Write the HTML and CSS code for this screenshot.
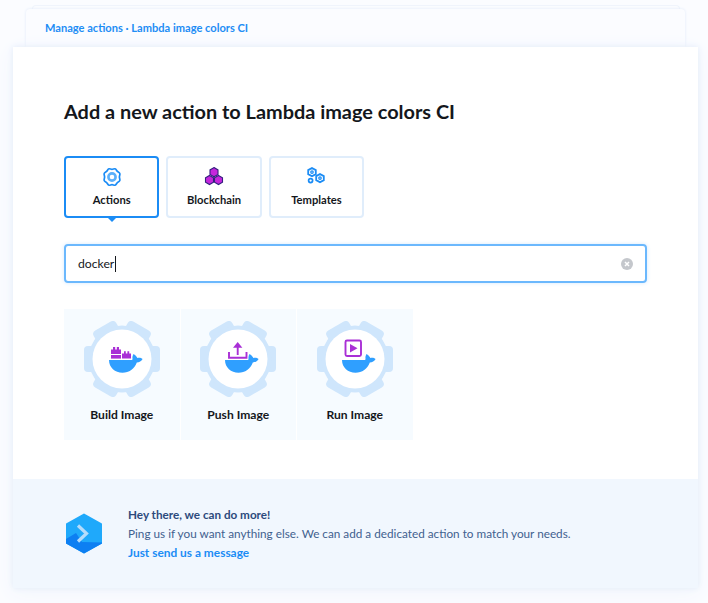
FILE: index.html
```html
<!DOCTYPE html>
<html lang="en">
<head>
    <meta charset="UTF-8">
    <meta name="viewport" content="width=device-width, initial-scale=1.0">
    <link rel="stylesheet" href="styles.css">
    <title>Add a new action</title>
</head>
<body>
    <svg class="defs" width="0" height="0">
        <defs>
            <g id="gear">
                <rect x="25" y="0" width="26" height="76" rx="4" fill="#cfe6fc" transform="rotate(30 38 38)"/>
                <rect x="25" y="0" width="26" height="76" rx="4" fill="#cfe6fc" transform="rotate(90 38 38)"/>
                <rect x="25" y="0" width="26" height="76" rx="4" fill="#cfe6fc" transform="rotate(150 38 38)"/>
                <circle cx="38" cy="38" r="33.5" fill="#cfe6fc"/>
                <circle cx="38" cy="38" r="29.5" fill="#ffffff"/>
            </g>
            <path id="whale" fill="#2f9fff" d="M25 39H47.5C48.2 39 48.6 38.5 48.5 37.7C48.3 36.3 48.6 34.4 49.5 33C51 34 52.8 35.6 53.4 37C55.2 36.4 57.2 36.8 58.6 38C57.4 40.2 55.2 41.4 52.8 41.5C50.6 47.6 45 51.8 38.5 51.8C31 51.8 25 46.5 25 39Z"/>
        </defs>
    </svg>

    <div class="stack-far"></div>
    <div class="stack-near">
        <a class="crumbs" href="#">Manage actions · Lambda image colors CI</a>
    </div>

    <div class="card">
        <div class="card-body">
            <h1>Add a new action to Lambda image colors CI</h1>

            <div class="tabs">
                <div class="tab tab-active">
                    <svg width="20" height="20" viewBox="0 0 20 20" fill="none" stroke="#1b8cf5" stroke-width="1.7">
                        <path d="M7 1.8C8 1.6 8.9 2.4 10 2.4C11.1 2.4 12 1.6 13 1.8C14.2 2.1 14.4 3.4 15.2 4.2C16 5 17.4 5.2 17.8 6.4C18.2 7.6 17.4 8.8 17.4 10C17.4 11.2 18.2 12.4 17.8 13.6C17.4 14.8 16 15 15.2 15.8C14.4 16.6 14.2 17.9 13 18.2C12 18.4 11.1 17.6 10 17.6C8.9 17.6 8 18.4 7 18.2C5.8 17.9 5.6 16.6 4.8 15.8C4 15 2.6 14.8 2.2 13.6C1.8 12.4 2.6 11.2 2.6 10C2.6 8.8 1.8 7.6 2.2 6.4C2.6 5.2 4 5 4.8 4.2C5.6 3.4 5.8 2.1 7 1.8Z"/>
                        <circle cx="10" cy="10" r="3.6" stroke-width="2.6" stroke="#5cb0fa"/>
                    </svg>
                    <span>Actions</span>
                </div>
                <div class="tab">
                    <svg width="20" height="20" viewBox="0 0 20 20" stroke="#33207f" stroke-width="1.1" fill="#c526dc">
                        <path d="M10 0.6L14 2.9V7.5L10 9.8L6 7.5V2.9Z"/>
                        <path d="M5.5 8.4L9.5 10.7V15.3L5.5 17.6L1.5 15.3V10.7Z"/>
                        <path d="M14.5 8.4L18.5 10.7V15.3L14.5 17.6L10.5 15.3V10.7Z"/>
                    </svg>
                    <span>Blockchain</span>
                </div>
                <div class="tab">
                    <svg width="20" height="20" viewBox="0 0 20 20" fill="none" stroke="#1b8cf5">
                        <path stroke-width="1.8" d="M6 1L9.8 3.1V7.1L6 9.2L2.2 7.1V3.1Z"/>
                        <circle cx="6" cy="5.1" r="1.2" stroke-width="1.3"/>
                        <path stroke-width="1.8" d="M14 7L17.8 9.1V13.1L14 15.2L10.2 13.1V9.1Z"/>
                        <circle cx="14" cy="11.1" r="1.2" stroke-width="1.3"/>
                        <circle cx="4.6" cy="13.6" r="2" stroke-width="1.7"/>
                    </svg>
                    <span>Templates</span>
                </div>
            </div>

            <div class="search">
                <span class="search-text">docker</span>
                <span class="caret"></span>
                <span class="search-clear">
                    <svg width="12" height="12" viewBox="0 0 12 12">
                        <circle cx="6" cy="6" r="6" fill="#c4c7cc"/>
                        <path d="M4 4L8 8M8 4L4 8" stroke="#ffffff" stroke-width="1.5"/>
                    </svg>
                </span>
            </div>

            <div class="tiles">
                <div class="tile">
                    <svg width="76" height="76" viewBox="0 0 76 76">
                        <use href="#gear"/>
                        <use href="#whale"/>
                        <g fill="#a92fd6">
                            <path d="M27 28.5H29V26H31.2V28.5H32.8V26H35V28.5H37V33H27Z"/>
                            <rect x="27" y="34" width="10" height="3.6"/>
                            <path d="M38 32.5H40V30.2H41.8V32.5H43.4V30.2H45.2V32.5H47V37.6H38Z"/>
                        </g>
                    </svg>
                    <span>Build Image</span>
                </div>
                <div class="tile">
                    <svg width="76" height="76" viewBox="0 0 76 76">
                        <use href="#gear"/>
                        <use href="#whale"/>
                        <g fill="none" stroke="#a92fd6" stroke-width="1.9">
                            <path d="M29 31V36.8H46.5V31"/>
                            <path d="M37.7 34V24"/>
                        </g>
                        <path d="M37.7 21L42.4 26.8H33Z" fill="#a92fd6"/>
                    </svg>
                    <span>Push Image</span>
                </div>
                <div class="tile">
                    <svg width="76" height="76" viewBox="0 0 76 76">
                        <use href="#gear"/>
                        <use href="#whale"/>
                        <rect x="28.5" y="19.5" width="15.5" height="15.5" rx="1.5" fill="none" stroke="#a92fd6" stroke-width="1.9"/>
                        <path d="M33 23V31.5L40.5 27.2Z" fill="#a92fd6"/>
                    </svg>
                    <span>Run Image</span>
                </div>
            </div>
        </div>

        <div class="card-footer">
            <svg width="38" height="41" viewBox="0 0 38 41">
                <path d="M19 1.5L36 11V30L19 39.5L2 30V11Z" fill="#1fa9fb" stroke="#1fa9fb" stroke-width="2" stroke-linejoin="round"/>
                <path d="M1 26L11 20L17 29L37 29.5V30.5L19 40.5L1 30.5Z" fill="#0d7ff2"/>
                <path d="M13 12.5L21.5 20.5L13 28.5" fill="none" stroke="#b5dcfb" stroke-width="3.2"/>
            </svg>
            <div class="footer-text">
                <strong>Hey there, we can do more!</strong>
                <p>Ping us if you want anything else. We can add a dedicated action to match your needs.</p>
                <a href="#">Just send us a message</a>
            </div>
        </div>
    </div>
</body>
</html>
```

FILE: styles.css
```css
body {
    font-family: 'Lato', 'Open Sans', sans-serif;
    background-color: #fbfcff;
    margin: 0;
    height: 603px;
    overflow: hidden;
    color: #14171c;
}

.defs {
    display: block;
    height: 0;
}

.stack-far {
    height: 4px;
    margin: 5px 28px 0 32px;
    background-color: #fbfcff;
    border: 1px solid #f0f4fc;
    border-bottom: none;
    border-radius: 4px 4px 0 0;
}

.stack-near {
    height: 38px;
    box-sizing: border-box;
    margin: -1px 23px 0 26px;
    padding: 11px 0 0 19px;
    background-color: #fbfcff;
    border-radius: 4px 4px 0 0;
    box-shadow: 0 0 3px #dfe9f8;
}

.crumbs {
    display: block;
    color: #1b8cf5;
    font-size: 11.1px;
    font-weight: 700;
    line-height: 16px;
    text-decoration: none;
}

.card {
    position: relative;
    width: 685px;
    height: 541px;
    margin-left: 13px;
    display: flex;
    flex-direction: column;
    background-color: #ffffff;
    box-shadow: 0 0 6px #e3ecf9, 0 4px 20px #f1f5fc;
}

.card-body {
    flex: 1;
    padding: 52px 51px 0;
}

h1 {
    margin: 0 0 33px;
    font-size: 19.9px;
    font-weight: 700;
    line-height: 24px;
    color: #14171c;
}

.tabs {
    display: flex;
    gap: 7px;
}

.tab {
    position: relative;
    width: 95.4px;
    height: 62px;
    box-sizing: border-box;
    padding-top: 9px;
    display: flex;
    flex-direction: column;
    align-items: center;
    gap: 5px;
    border: 2px solid #e0edfb;
    border-radius: 4px;
    font-size: 11.2px;
    font-weight: 700;
    line-height: 16px;
}

.tab-active {
    border-color: #1b8cf5;
}

.tab-active::after {
    content: "";
    position: absolute;
    left: 42px;
    bottom: -6px;
    border-left: 4px solid transparent;
    border-right: 4px solid transparent;
    border-top: 4px solid #1b8cf5;
}

.search {
    height: 39px;
    box-sizing: border-box;
    margin-top: 26px;
    padding: 0 12px;
    display: flex;
    align-items: center;
    border: 2px solid #6bb8fd;
    border-radius: 4px;
    box-shadow: 0 0 4px #d5e9fd;
    font-size: 12.2px;
}

.caret {
    width: 1px;
    height: 16px;
    margin-left: 1px;
    background-color: #14171c;
}

.search-clear {
    margin-left: auto;
    display: flex;
}

.tiles {
    display: flex;
    gap: 1px;
    margin-top: 26px;
}

.tile {
    width: 115.5px;
    height: 131px;
    box-sizing: border-box;
    padding-top: 12px;
    display: flex;
    flex-direction: column;
    align-items: center;
    gap: 10px;
    background-color: #f6fbff;
    font-size: 12.1px;
    font-weight: 700;
    line-height: 16px;
}

.card-footer {
    height: 109px;
    box-sizing: border-box;
    padding: 0 52px;
    display: flex;
    align-items: center;
    gap: 25px;
    background-color: #f1f7fe;
}

.footer-text {
    font-size: 11.75px;
    line-height: 19px;
    color: #41618f;
}

.footer-text strong {
    display: block;
    color: #2c4a7c;
    font-size: 11.7px;
    font-weight: 700;
}

.footer-text p {
    margin: 0;
}

.footer-text a {
    display: block;
    color: #1b8cf5;
    font-size: 11.9px;
    font-weight: 700;
    text-decoration: none;
}
```
